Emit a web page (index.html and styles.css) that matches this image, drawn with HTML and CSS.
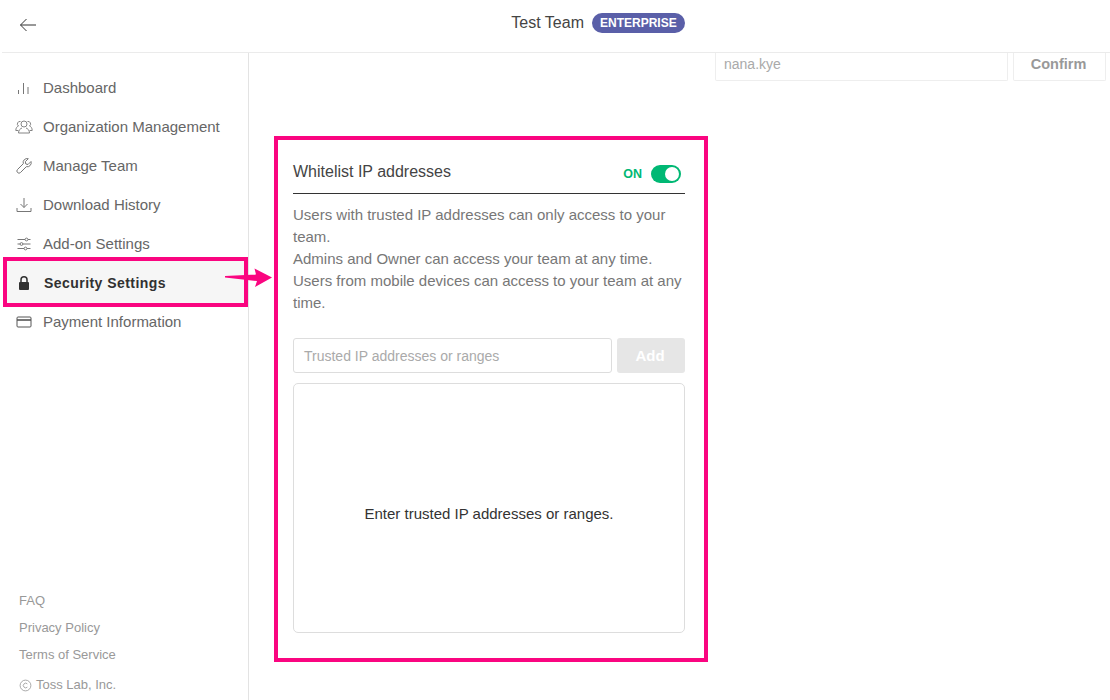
FILE: index.html
```html
<!DOCTYPE html>
<html lang="en">
<head>
<meta charset="utf-8">
<title>Security Settings</title>
<link rel="stylesheet" href="styles.css">
</head>
<body>
<header class="topbar">
  <svg class="back" width="18" height="14" viewBox="0 0 18 14"><path d="M17 7H1.500M7.500 1 1.500 7l6 6" fill="none" stroke="#333" stroke-width="1"/></svg>
  <div class="team"><span class="team-name">Test Team</span><span class="badge">ENTERPRISE</span></div>
</header>
<div class="body">
  <aside class="sidebar">
    <nav class="menu">
      <a class="item"><svg class="ico" viewBox="0 0 16 16"><path d="M2.500 10v4M7.500 3v11M12 7v7" stroke="#777" fill="none"/></svg>Dashboard</a>
      <a class="item"><svg class="ico ico-wide" viewBox="0 0 18 16"><g fill="none" stroke="#777" stroke-width=".9"><circle cx="9" cy="5" r="3"/><path d="M3.500 14c0-3 2-4.500 3.500-5M14.500 14c0-3-2-4.500-3.500-5M3.500 14h11"/><path d="M5.500 2.500a2.500 2.500 0 0 0-2 4.500C2 7.500.8 9 .8 11.500h2.500M12.500 2.500a2.500 2.500 0 0 1 2 4.500c1.500.5 2.700 2 2.700 4.500h-2.500"/></g></svg>Organization Management</a>
      <a class="item"><svg class="ico" viewBox="0 0 16 16"><path d="M15 3.500 12 6.500 9.800 6l-.5-2.300 3-3a4 4 0 0 0-5 5L1.500 11.500a2 2 0 0 0 3 3L10.300 8.700a4 4 0 0 0 4.700-5.200Z" fill="none" stroke="#777"/></svg>Manage Team</a>
      <a class="item"><svg class="ico" viewBox="0 0 16 16"><path d="M8 1v9.500M4.500 7 8 10.500 11.500 7M1 11v3.500h14V11" fill="none" stroke="#777"/></svg>Download History</a>
      <a class="item"><svg class="ico" viewBox="0 0 16 16"><g fill="none" stroke="#777"><path d="M1.500 3.500H9M12 3.500h2.500M1.500 8H4M7 8h7.500M1.500 12.500H8M11 12.500h3.500"/><circle cx="10.500" cy="3.500" r="1.400"/><circle cx="5.500" cy="8" r="1.400"/><circle cx="9.500" cy="12.500" r="1.400"/></g></svg>Add-on Settings</a>
      <a class="item item-active"><svg class="ico ico-lock" viewBox="0 0 16 16"><path d="M5 7V4.800a3 3 0 0 1 6 0V7" fill="none" stroke="#333" stroke-width="1.500"/><rect x="3" y="7" width="10" height="8" rx="1" fill="#333"/></svg>Security Settings</a>
      <a class="item"><svg class="ico" viewBox="0 0 16 16"><path d="M2 3h12a1 1 0 0 1 1 1v8a1 1 0 0 1-1 1H2a1 1 0 0 1-1-1V4a1 1 0 0 1 1-1Z" fill="none" stroke="#555"/><path d="M1 6h14" stroke="#555" stroke-width="1.600"/></svg>Payment Information</a>
    </nav>
    <div class="foot">
      <a class="foot-link">FAQ</a>
      <a class="foot-link">Privacy Policy</a>
      <a class="foot-link">Terms of Service</a>
      <div class="copy"><svg class="copy-ico" viewBox="0 0 14 14"><circle cx="7" cy="7" r="5.800" fill="none" stroke="#999" stroke-width=".9"/><path d="M9 5.300a2.500 2.500 0 1 0 0 3.400" fill="none" stroke="#999" stroke-width=".9"/></svg>Toss Lab, Inc.</div>
    </div>
  </aside>
  <main class="main">
    <div class="top-row">
      <div class="top-input">nana.kye</div>
      <div class="top-btn">Confirm</div>
    </div>
    <section class="card">
      <div class="card-head">
        <span class="card-title">Whitelist IP addresses</span>
        <span class="status">ON</span>
        <span class="toggle"><span class="knob"></span></span>
      </div>
      <p class="desc">Users with trusted IP addresses can only access to your team.<br>Admins and Owner can access your team at any time.<br>Users from mobile devices can access to your team at any time.</p>
      <div class="add-row">
        <div class="ip-input">Trusted IP addresses or ranges</div>
        <div class="add-btn">Add</div>
      </div>
      <div class="empty">Enter trusted IP addresses or ranges.</div>
    </section>
  </main>
</div>
<div class="mark-box"></div>
<svg class="mark-arrow" width="50" height="24" viewBox="0 0 50 24"><path d="M0 9 31 7.500 29.500 1.500 47 10.500 30 20 32 14 0 10.500Z" fill="#fa0580"/></svg>
</body>
</html>
```
FILE: styles.css
```css
* { box-sizing: border-box; }
html, body { margin: 0; height: 700px; overflow: hidden; }
body { font-family: "Liberation Sans", Arial, sans-serif; background: #fff; color: #333; position: relative; }
.topbar { height: 53px; border-bottom: 1px solid #ebebeb; margin-left: 2px; position: relative; display: flex; align-items: center; justify-content: center; padding-left: 84px; }
.back { position: absolute; left: 17px; top: 18px; }
.team { display: flex; align-items: center; gap: 8px; margin-top: -7px; }
.team-name { font-size: 16px; color: #444; }
.badge { background: #5a5fa8; color: #fff; font-size: 12px; font-weight: 700; height: 20px; line-height: 20px; padding: 0 8px; border-radius: 10px; }
.body { display: flex; height: 647px; }
.sidebar { width: 249px; border-right: 1px solid #e3e3e3; display: flex; flex-direction: column; justify-content: space-between; padding-top: 15px; }
.menu { display: flex; flex-direction: column; }
.item { height: 39px; display: flex; align-items: center; padding-left: 16px; font-size: 15px; color: #666; }
.item-active { color: #333; font-weight: 700; font-size: 14px; letter-spacing: .45px; }
.ico { width: 16px; height: 16px; margin-right: 11px; flex: none; }
.ico-wide { width: 18px; margin-left: -1px; margin-right: 10px; }
.ico-lock { margin-right: 12px; }
.foot { padding: 0 0 0 19px; display: flex; flex-direction: column; }
.foot-link { font-size: 13px; color: #999; height: 27px; line-height: 27px; }
.copy { font-size: 13px; color: #999; height: 32px; display: flex; align-items: center; }
.copy-ico { width: 13px; height: 13px; margin-right: 4px; margin-top: 3px; }
.main { flex: 1; padding-left: 25px; }
.top-row { display: flex; justify-content: flex-end; gap: 5px; padding-right: 4px; height: 28px; }
.top-input { width: 293px; border: 1px solid #eee; border-top: 0; border-radius: 0 0 2px 2px; font-size: 14px; color: #aaa; padding: 3px 10px 0 8px; }
.top-btn { width: 93px; border: 1px solid #eee; border-top: 0; border-radius: 0 0 2px 2px; font-size: 14.500px; font-weight: 700; color: #999; text-align: center; padding: 3px 2px 0 0; }
.card { width: 434px; height: 526px; margin-top: 55px; border: 4px solid #fa0580; padding: 0 19px 0 15px; }
.card-head { height: 54px; display: flex; align-items: center; border-bottom: 1px solid #333; padding: 14px 4px 0 0; font-size: 16px; }
.card-title { flex: 1; color: #444; margin-top: -3px; font-size: 16px; }
.status { color: #00b874; font-size: 12.500px; font-weight: 700; margin-right: 9px; }
.toggle { width: 30px; height: 18px; background: #00b874; border-radius: 9px; position: relative; }
.knob { position: absolute; right: 2px; top: 2px; width: 14px; height: 14px; border-radius: 50%; background: #fff; }
.desc { margin: 10px 0 0; font-size: 15px; line-height: 22px; color: #777; }
.add-row { display: flex; gap: 5px; margin-top: 24px; height: 35px; }
.ip-input { flex: 1; border: 1px solid #ddd; border-radius: 3px; font-size: 14px; color: #aaa; line-height: 34px; padding-left: 10px; }
.add-btn { width: 68px; background: #e6e6e6; color: #fff; font-size: 15px; font-weight: 700; text-align: center; line-height: 35px; border-radius: 3px; padding-right: 2px; }
.empty { margin-top: 10px; height: 250px; border: 1px solid #ddd; border-radius: 5px; display: flex; align-items: center; justify-content: center; padding-top: 10px; font-size: 15px; color: #333; }
.mark-box { position: absolute; left: 3px; top: 257px; width: 245px; height: 50px; border: 4px solid #fa0580; box-shadow: inset 0 0 0 100px rgba(0,0,0,.035); }
.mark-arrow { position: absolute; left: 225px; top: 267px; }
```
